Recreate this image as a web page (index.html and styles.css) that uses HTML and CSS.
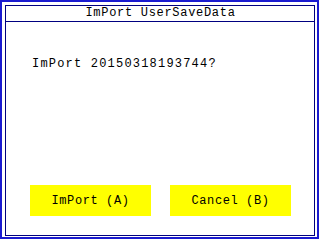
FILE: index.html
```html
<!DOCTYPE html>
<html>
<head>
<meta charset="utf-8">
<link rel="stylesheet" href="styles.css">
</head>
<body>
<div class="frame">
  <div class="panel">
    <div class="title">ImPort UserSaveData</div>
    <div class="message">ImPort 20150318193744?</div>
    <div class="buttons">
      <div class="btn">ImPort (A)</div>
      <div class="btn">Cancel (B)</div>
    </div>
  </div>
</div>
</body>
</html>
```
FILE: styles.css
```css
html, body {
  margin: 0;
  padding: 0;
  background: #ffffff;
}
body {
  width: 320px;
  height: 240px;
  overflow: hidden;
  font-family: "Liberation Mono", "DejaVu Sans Mono", monospace;
  font-size: 12px;
  color: #000000;
}
.frame {
  box-sizing: border-box;
  width: 319px;
  height: 239px;
  border: 2px solid #1a1ad0;
  padding: 3px 2px 1px 3px;
}
.panel {
  box-sizing: border-box;
  width: 310px;
  height: 231px;
  border: 1px solid #000080;
  display: flex;
  flex-direction: column;
}
.title {
  height: 15px;
  line-height: 15px;
  border-bottom: 1px solid #000080;
  text-align: center;
  letter-spacing: 0.7px;
  padding-left: 1px;
}
.message {
  margin-top: 35px;
  padding-left: 26px;
  line-height: 14px;
  letter-spacing: 1.2px;
}
.buttons {
  margin-top: auto;
  padding: 0 0 19px 24px;
  display: flex;
  gap: 19px;
}
.btn {
  width: 121px;
  height: 31px;
  background: #ffff00;
  display: flex;
  align-items: center;
  justify-content: center;
  letter-spacing: 0.6px;
}
```
